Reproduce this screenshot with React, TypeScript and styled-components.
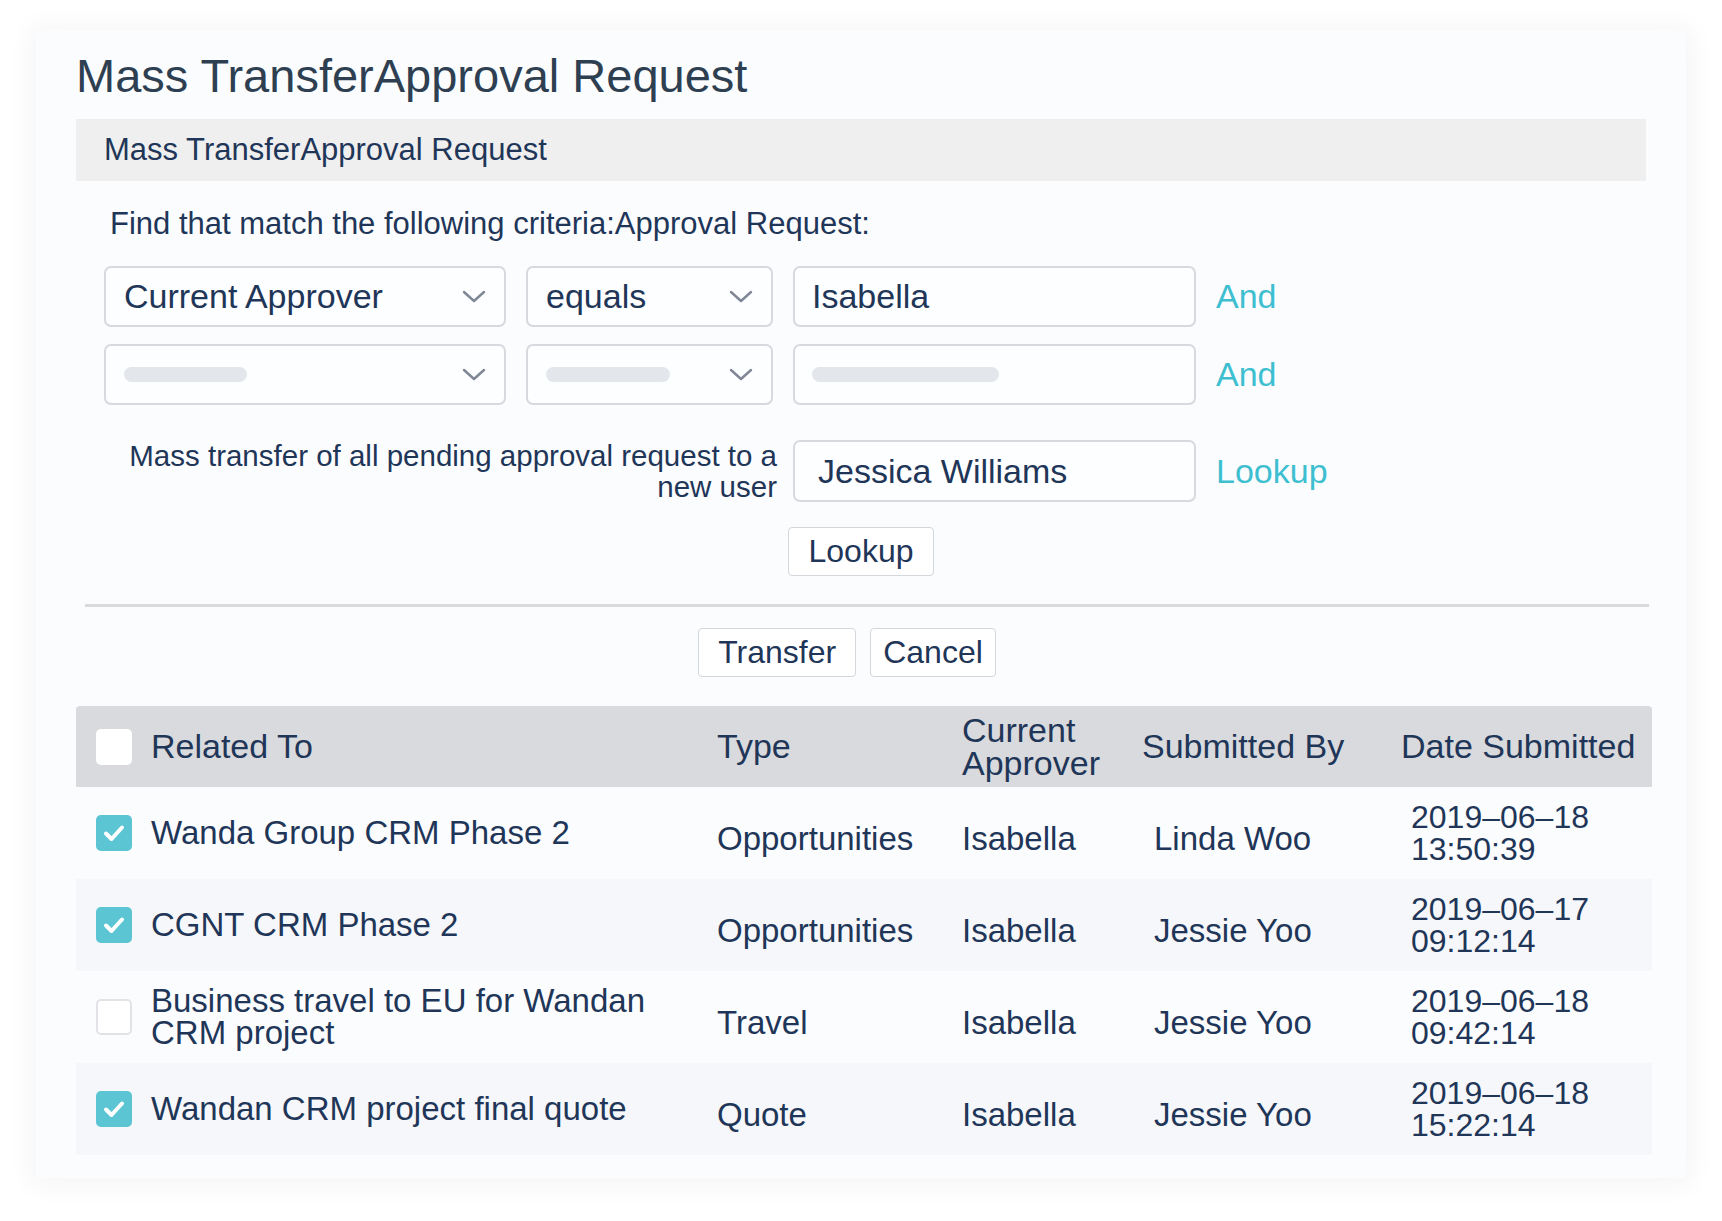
import React from "react";
import styled, { createGlobalStyle } from "styled-components";

interface RowData {
  related: string;
  type: string;
  approver: string;
  submittedBy: string;
  date: string;
  time: string;
  checked: boolean;
}

const rows: RowData[] = [
  { related: "Wanda Group CRM Phase 2", type: "Opportunities", approver: "Isabella", submittedBy: "Linda Woo", date: "2019–06–18", time: "13:50:39", checked: true },
  { related: "CGNT CRM Phase 2", type: "Opportunities", approver: "Isabella", submittedBy: "Jessie Yoo", date: "2019–06–17", time: "09:12:14", checked: true },
  { related: "Business travel to EU for Wandan CRM project", type: "Travel", approver: "Isabella", submittedBy: "Jessie Yoo", date: "2019–06–18", time: "09:42:14", checked: false },
  { related: "Wandan CRM project final quote", type: "Quote", approver: "Isabella", submittedBy: "Jessie Yoo", date: "2019–06–18", time: "15:22:14", checked: true },
];

const Chevron = () => (
  <svg width="24" height="13" viewBox="0 0 24 13" fill="none">
    <polyline points="2,2 12,11 22,2" stroke="#7f8695" strokeWidth="2.4" strokeLinecap="round" strokeLinejoin="round" />
  </svg>
);

const Tick = () => (
  <svg width="22" height="18" viewBox="0 0 22 18" fill="none">
    <polyline points="3,9.5 8.5,15 19,3.5" stroke="#ffffff" strokeWidth="4" strokeLinecap="round" strokeLinejoin="round" />
  </svg>
);

const App: React.FC = () => {
  return (
    <>
      <GlobalStyle />
      <Page>
        <Card>
          <Title>Mass TransferApproval Request</Title>
          <SectionBar>Mass TransferApproval Request</SectionBar>
          <Criteria>Find that match the following criteria:Approval Request:</Criteria>

          <FormGrid>
            <SelectBox>
              <FieldText>Current Approver</FieldText>
              <Chevron />
            </SelectBox>
            <SelectBox>
              <FieldText>equals</FieldText>
              <Chevron />
            </SelectBox>
            <TextBox>
              <FieldText>Isabella</FieldText>
            </TextBox>
            <LinkText>And</LinkText>

            <SelectBox>
              <Pill $width={123} />
              <Chevron />
            </SelectBox>
            <SelectBox>
              <Pill $width={124} />
              <Chevron />
            </SelectBox>
            <TextBox>
              <Pill $width={187} />
            </TextBox>
            <LinkText>And</LinkText>

            <TransferLabel>Mass transfer of all pending approval request to a new user</TransferLabel>
            <TextBox $spaced $inset={23}>
              <FieldText>Jessica Williams</FieldText>
            </TextBox>
            <LinkText $spaced>Lookup</LinkText>
          </FormGrid>

          <ButtonRow $top={25}>
            <Button>Lookup</Button>
          </ButtonRow>

          <Divider />

          <ButtonRow $top={21} $shift={28}>
            <Button $pad={19}>Transfer</Button>
            <Button $pad={12}>Cancel</Button>
          </ButtonRow>

          <Table>
            <HeaderRow>
              <RelatedCell>
                <Check $checked={false} $header />
                <span>Related To</span>
              </RelatedCell>
              <HeadCell>Type</HeadCell>
              <HeadCell>
                Current
                <br />
                Approver
              </HeadCell>
              <HeadCell>Submitted By</HeadCell>
              <HeadCell>Date Submitted</HeadCell>
            </HeaderRow>
            {rows.map((r, i) => (
              <BodyRow key={i} $alt={i % 2 === 1}>
                <RelatedCell>
                  <Check $checked={r.checked}>{r.checked && <Tick />}</Check>
                  <span>{r.related}</span>
                </RelatedCell>
                <Cell $drop>{r.type}</Cell>
                <Cell $drop>{r.approver}</Cell>
                <Cell $drop $inset={12}>{r.submittedBy}</Cell>
                <DateCell>
                  {r.date}
                  <br />
                  {r.time}
                </DateCell>
              </BodyRow>
            ))}
          </Table>
        </Card>
      </Page>
    </>
  );
};

export default App;

const GlobalStyle = createGlobalStyle`
  body {
    margin: 0;
    background: #ffffff;
    font-family: "Liberation Sans", Arial, sans-serif;
    color: #1f3658;
  }
`;

const Page = styled.div`
  padding: 30px 36px 40px;
`;

const Card = styled.div`
  width: 1650px;
  box-sizing: border-box;
  padding: 18px 40px 23px;
  background: #fbfcfe;
  border-radius: 4px;
  box-shadow: 0 2px 26px 6px rgba(0, 0, 0, 0.045);
`;

const Title = styled.h1`
  margin: 0;
  font-size: 47px;
  line-height: 56px;
  font-weight: 400;
  color: #2e3f52;
`;

const SectionBar = styled.div`
  margin-top: 15px;
  height: 62px;
  display: flex;
  align-items: center;
  padding-left: 28px;
  background: #efefef;
  font-size: 31px;
  color: #1f3658;
`;

const Criteria = styled.p`
  margin: 25px 0 0 34px;
  font-size: 31px;
  line-height: 36px;
`;

const FormGrid = styled.div`
  margin: 24px 0 0 28px;
  display: grid;
  grid-template-columns: 402px 247px 403px auto;
  grid-template-rows: 61px 61px auto;
  column-gap: 20px;
  row-gap: 17px;
  align-items: center;
`;

const SelectBox = styled.div`
  height: 61px;
  box-sizing: border-box;
  display: flex;
  align-items: center;
  justify-content: space-between;
  padding: 0 18px 0 18px;
  border: 2px solid #d6d9dd;
  border-radius: 7px;
  background: #fdfeff;
`;

const TextBox = styled.div<{ $spaced?: boolean; $inset?: number }>`
  height: ${(p) => (p.$spaced ? 62 : 61)}px;
  box-sizing: border-box;
  display: flex;
  align-items: center;
  padding-left: ${(p) => p.$inset ?? 17}px;
  border: 2px solid #d6d9dd;
  border-radius: 7px;
  background: #fdfeff;
  margin-top: ${(p) => (p.$spaced ? 18 : 0)}px;
`;

const FieldText = styled.span`
  font-size: 34px;
  color: #1f3658;
`;

const Pill = styled.span<{ $width: number }>`
  display: block;
  width: ${(p) => p.$width}px;
  height: 15px;
  border-radius: 8px;
  background: #e3e6eb;
`;

const LinkText = styled.span<{ $spaced?: boolean }>`
  font-size: 34px;
  color: #3ebfd0;
  margin-top: ${(p) => (p.$spaced ? 18 : 0)}px;
  cursor: pointer;
`;

const TransferLabel = styled.div`
  grid-column: 1 / span 2;
  margin: 18px -4px 0 0;
  text-align: right;
  font-size: 29.5px;
  line-height: 31px;
  color: #1f3658;
`;

const ButtonRow = styled.div<{ $top: number; $shift?: number }>`
  margin-top: ${(p) => p.$top}px;
  display: flex;
  justify-content: center;
  gap: 14px;
  padding-right: ${(p) => p.$shift ?? 0}px;
`;

const Button = styled.button<{ $pad?: number }>`
  height: 49px;
  padding: 0 ${(p) => p.$pad ?? 20}px;
  border: 1.5px solid #d3d6da;
  border-radius: 4px;
  background: #ffffff;
  font-family: "Liberation Sans", Arial, sans-serif;
  font-size: 32px;
  color: #1f3658;
  cursor: pointer;
`;

const Divider = styled.hr`
  margin: 28px -3px 0 9px;
  border: 0;
  height: 3px;
  background: #d9dadc;
`;

const Table = styled.div`
  margin: 29px -6px 0 0;
`;

const rowGrid = `
  display: grid;
  grid-template-columns: 621px 245px 180px 259px 1fr;
  padding-left: 20px;
  align-items: center;
`;

const HeaderRow = styled.div`
  ${rowGrid}
  height: 81px;
  background: #d9dadd;
  border-radius: 4px 4px 0 0;
  font-size: 34px;
  line-height: 33px;
`;

const BodyRow = styled.div<{ $alt: boolean }>`
  ${rowGrid}
  height: 92px;
  background: ${(p) => (p.$alt ? "#f5f7fa" : "transparent")};
  font-size: 33px;
  line-height: 32px;
`;

const RelatedCell = styled.div`
  display: flex;
  align-items: center;
  gap: 19px;
  padding-right: 40px;
`;

const HeadCell = styled.div`
  color: #1f3658;
`;

const Cell = styled.div<{ $drop?: boolean; $inset?: number }>`
  padding-top: ${(p) => (p.$drop ? 12 : 0)}px;
  padding-left: ${(p) => p.$inset ?? 0}px;
`;

const DateCell = styled.div`
  padding-left: 10px;
  font-size: 32px;
  line-height: 32px;
`;

const Check = styled.span<{ $checked: boolean; $header?: boolean }>`
  flex: none;
  width: 36px;
  height: 36px;
  box-sizing: border-box;
  display: flex;
  align-items: center;
  justify-content: center;
  border-radius: 5px;
  background: ${(p) => (p.$checked ? "#5bc5d4" : "#ffffff")};
  border: ${(p) => (p.$checked || p.$header ? "none" : "2px solid #e1e3e6")};
`;
